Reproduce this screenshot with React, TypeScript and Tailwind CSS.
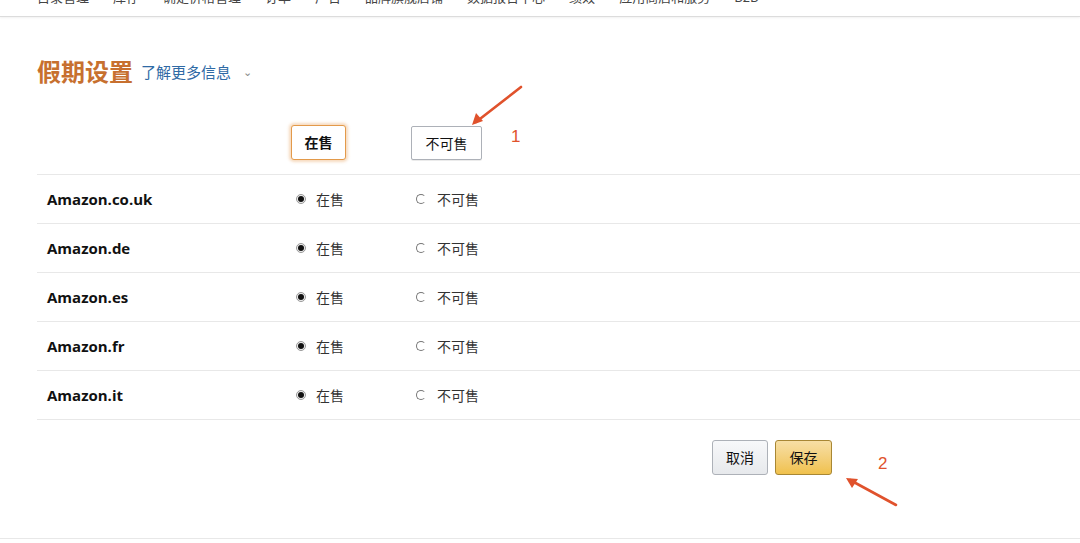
import React from 'react'

const cjk = { fontFamily: '"Noto Sans CJK SC", "Noto Sans", sans-serif' }

const navItems = ['目录管理', '库存', '确定价格管理', '订单', '广告', '品牌旗舰店铺', '数据报告中心', '绩效', '应用商店和服务', 'B2B']

const markets = ['Amazon.co.uk', 'Amazon.de', 'Amazon.es', 'Amazon.fr', 'Amazon.it']

function Radio({ checked }: { checked: boolean }) {
  if (checked) {
    return (
      <span className="inline-flex h-[10px] w-[10px] items-center justify-center rounded-full border border-[#999] bg-[#eee]">
        <span className="h-[6px] w-[6px] rounded-full bg-[#111]" />
      </span>
    )
  }
  return <span className="inline-block h-[10px] w-[10px] rounded-full border border-[#777] border-r-transparent" />
}

function Arrow({ flip }: { flip?: boolean }) {
  // red annotation arrow
  return (
    <svg width="56" height="44" viewBox="0 0 56 44" className="overflow-visible">
      {flip ? (
        <g stroke="#e0522c" strokeWidth="2.6" strokeLinecap="round" fill="#e0522c">
          <line x1="52" y1="27" x2="6" y2="2" />
          <path d="M2 0 L14 1 L8 10 Z" stroke="none" />
        </g>
      ) : (
        <g stroke="#e0522c" strokeWidth="2.6" strokeLinecap="round" fill="#e0522c">
          <line x1="51" y1="1" x2="6" y2="36" />
          <path d="M2 39 L6 27 L13 35 Z" stroke="none" />
        </g>
      )}
    </svg>
  )
}

export default function App() {
  return (
    <div className="relative h-[543px] w-[1080px] overflow-hidden bg-white" style={cjk}>
      {/* top navigation, scrolled mostly out of view */}
      <div className="h-[17px] overflow-hidden border-b border-[#dcdcdc] shadow-[0_1px_2px_rgba(0,0,0,0.06)]">
        <div className="-mt-[13px] flex gap-[24px] pl-[37px] text-[13px] leading-[20px] text-[#444]">
          {navItems.map((n) => (
            <span key={n}>{n}</span>
          ))}
        </div>
      </div>

      <div className="pl-[37px]">
        <div className="mt-[38px] flex items-center">
          <h1 className="text-[24px] font-bold leading-[32px] text-[#c7702f]">假期设置</h1>
          <a className="ml-[8px] mt-[3px] text-[15px] text-[#2f6aa5]">了解更多信息</a>
          <span className="ml-[12px] mt-[1px] text-[11px] text-[#888]">⌄</span>
        </div>

        <div className="relative mt-[38px] flex h-[49px] items-start">
          <div className="w-[254px]" />
          <div className="w-[120px]">
            <button className="h-[35px] w-[55px] rounded-[3px] border border-[#e39a4a] bg-white text-[14px] font-bold text-[#111] shadow-[0_0_3px_2px_rgba(228,150,70,0.35)]">
              在售
            </button>
          </div>
          <div>
            <button className="mt-px h-[34px] w-[71px] rounded-[2px] border border-[#adb1b8] bg-white text-[14px] text-[#111] shadow-[0_1px_0_rgba(0,0,0,0.08)]">
              不可售
            </button>
          </div>
          <span className="ml-[29px] mt-[-1px] text-[17px] text-[#e0522c]" style={{ fontFamily: '"Liberation Sans", sans-serif' }}>
            1
          </span>
          <div className="absolute left-[433px] top-[-39px]">
            <Arrow />
          </div>
        </div>

        <div className="border-t border-[#e8e8e8]">
          {markets.map((m) => (
            <div key={m} className="flex h-[49px] items-center border-b border-[#e8e8e8]">
              <div className="w-[254px] pl-[10px] text-[15px] font-bold text-[#111]" style={{ fontFamily: '"Open Sans", sans-serif' }}>
                {m}
              </div>
              <label className="flex w-[120px] items-center pl-[5px] text-[14px] text-[#333]">
                <Radio checked />
                <span className="ml-[10px]">在售</span>
              </label>
              <label className="flex items-center pl-[5px] text-[14px] text-[#333]">
                <Radio checked={false} />
                <span className="ml-[11px]">不可售</span>
              </label>
            </div>
          ))}
        </div>

        <div className="relative mt-[20px] flex items-start pl-[675px]">
          <button className="h-[35px] w-[56px] rounded-[3px] border border-[#adb1b8] bg-gradient-to-b from-[#f7f8fa] to-[#e7e9ec] text-[14px] text-[#111]">
            取消
          </button>
          <button className="ml-[7px] h-[35px] w-[57px] rounded-[3px] border border-[#a88734] bg-gradient-to-b from-[#f7dfa5] to-[#f0c14b] text-[14px] text-[#111]">
            保存
          </button>
          <span className="ml-[46px] mt-[11px] text-[17px] text-[#e0522c]" style={{ fontFamily: '"Liberation Sans", sans-serif' }}>
            2
          </span>
          <div className="absolute left-[807px] top-[38px]">
            <Arrow flip />
          </div>
        </div>
      </div>

      <div className="absolute bottom-[4px] left-0 w-full border-t border-[#e8e8e8]" />
    </div>
  )
}
